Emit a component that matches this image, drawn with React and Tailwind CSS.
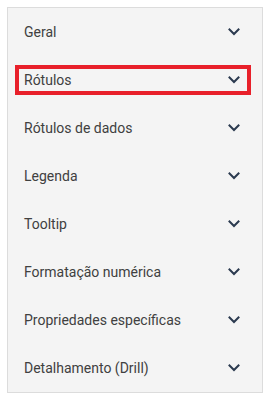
import React from "react";

const items = [
  "Geral",
  "Rótulos",
  "Rótulos de dados",
  "Legenda",
  "Tooltip",
  "Formatação numérica",
  "Propriedades específicas",
  "Detalhamento (Drill)",
];

function Chevron() {
  return (
    <svg width="12" height="8" viewBox="0 0 12 8" fill="none">
      <path d="M1.5 1.5 L6 6 L10.5 1.5" stroke="#2b3a4f" strokeWidth="2" strokeLinecap="square" />
    </svg>
  );
}

export default function App() {
  return (
    <div className="w-[271px] h-[403px] bg-white p-[7px]" style={{ fontFamily: "Roboto, 'Liberation Sans', sans-serif" }}>
      <div className="w-[256px] border border-[#dcdcdc] bg-[#f4f4f4] flex flex-col">
        {items.map((t, i) => (
          <div key={t} className="h-[48px] flex items-center pl-[7px] pr-[11px]">
            <div
              className={
                "flex-1 h-[30px] flex items-center justify-between pl-[5px] pr-[7px] " +
                (i === 1 ? "border-[4px] border-[#e8202a]" : "border-[4px] border-transparent")
              }
            >
              <span className="text-[14px] text-[#404040]">{t}</span>
              <Chevron />
            </div>
          </div>
        ))}
      </div>
    </div>
  );
}
